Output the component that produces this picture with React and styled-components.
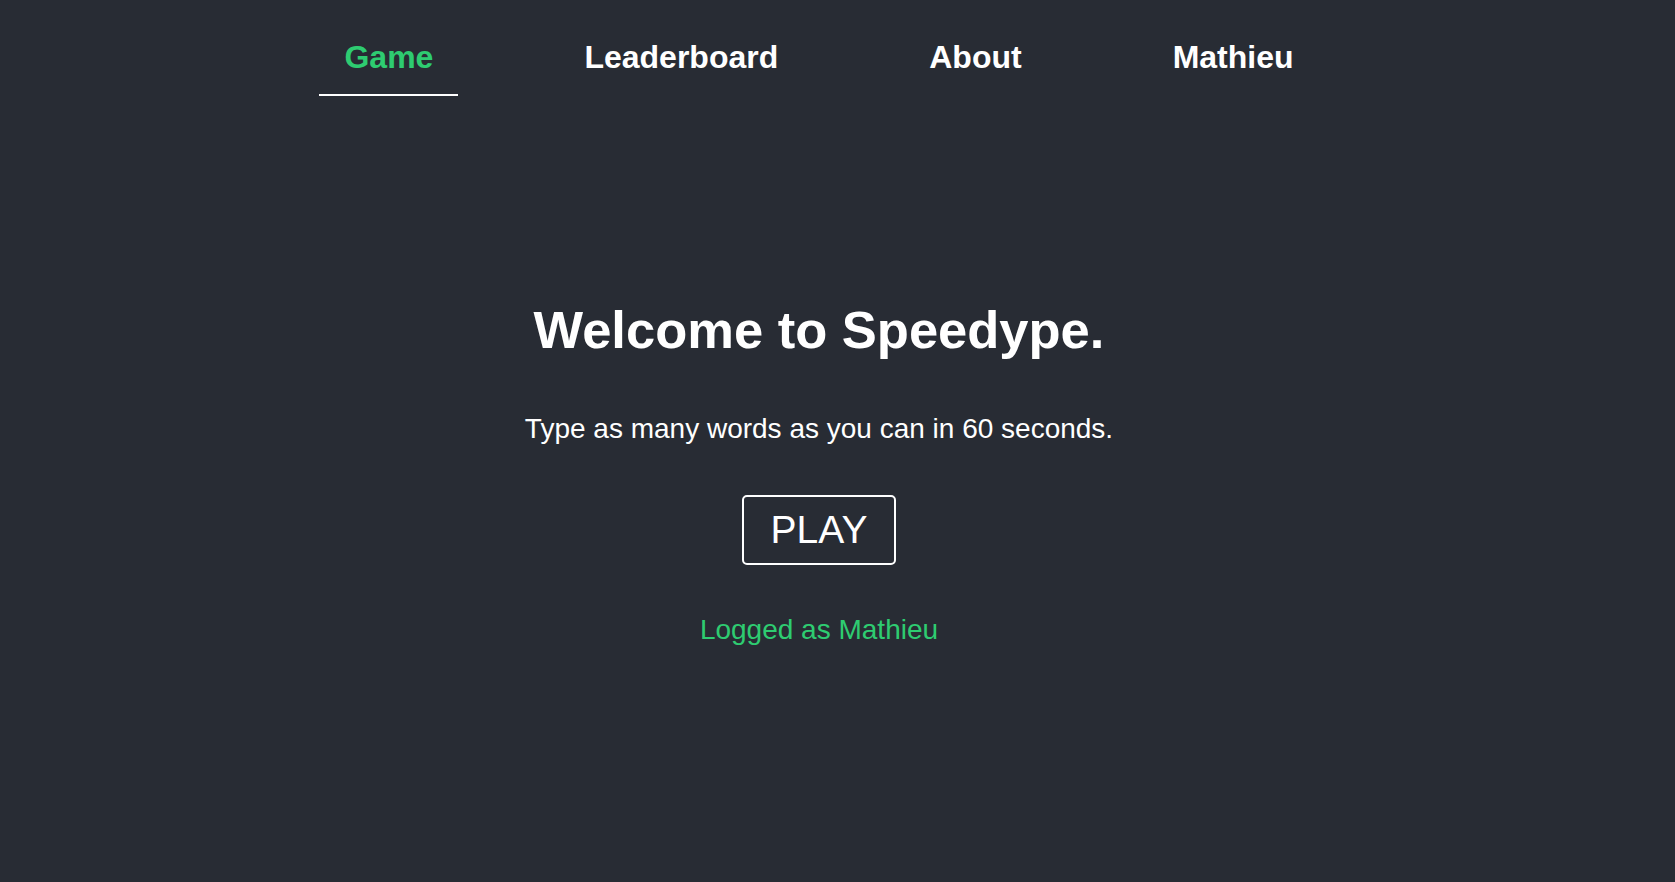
import styled, { createGlobalStyle } from "styled-components";

const GlobalStyle = createGlobalStyle`
  html, body {
    margin: 0;
    padding: 0;
    background-color: #282c34;
    font-family: "Liberation Sans", Arial, sans-serif;
  }
`;

const Page = styled.div`
  min-height: 100vh;
  padding-right: 37px;
  color: white;
  display: flex;
  flex-direction: column;
  align-items: center;
`;

const Nav = styled.nav`
  display: flex;
  gap: 101px;
  padding-top: 39px;
`;

const NavItem = styled.a`
  font-size: 32px;
  font-weight: bold;
  line-height: normal;
  padding: 0 25px 18px;
  color: ${(p) => (p.$active ? "#2ecc71" : "white")};
  border-bottom: 2px solid ${(p) => (p.$active ? "white" : "transparent")};
  text-decoration: none;
  cursor: pointer;
`;

const Main = styled.main`
  display: flex;
  flex-direction: column;
  align-items: center;
  padding-top: 203px;
`;

const Title = styled.h1`
  margin: 0;
  font-size: 52.5px;
  font-weight: bold;
  line-height: normal;
`;

const Subtitle = styled.p`
  margin: 53px 0 0;
  font-size: 28px;
  line-height: normal;
`;

const PlayButton = styled.button`
  margin-top: 50px;
  background: transparent;
  color: white;
  font-family: "Liberation Sans", Arial, sans-serif;
  font-size: 39px;
  line-height: normal;
  padding: 11px 27px;
  border: 2px solid white;
  border-radius: 5px;
  cursor: pointer;
`;

const LoggedText = styled.p`
  margin: 49px 0 0;
  font-size: 28px;
  line-height: normal;
  color: #2ecc71;
`;

function App() {
  const links = ["Game", "Leaderboard", "About", "Mathieu"];

  return (
    <>
      <GlobalStyle />
      <Page>
        <Nav>
          {links.map((name) => (
            <NavItem key={name} $active={name === "Game"}>
              {name}
            </NavItem>
          ))}
        </Nav>
        <Main>
          <Title>Welcome to Speedype.</Title>
          <Subtitle>Type as many words as you can in 60 seconds.</Subtitle>
          <PlayButton>PLAY</PlayButton>
          <LoggedText>Logged as Mathieu</LoggedText>
        </Main>
      </Page>
    </>
  );
}

export default App;
